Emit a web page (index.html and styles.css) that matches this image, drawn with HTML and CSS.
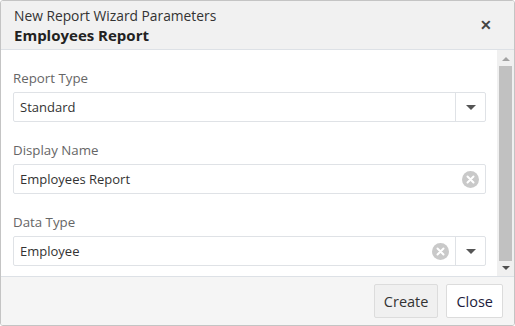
FILE: index.html
```html
<!DOCTYPE html>
<html lang="en">
<head>
  <meta charset="UTF-8">
  <title>New Report Wizard Parameters</title>
  <link rel="stylesheet" href="styles.css">
</head>
<body>
  <div class="dialog">
    <div class="dlg-head">
      <div class="head-text">
        <div class="sub">New Report Wizard Parameters</div>
        <div class="title">Employees Report</div>
      </div>
      <button class="close-x" title="Close">&#x2715;</button>
    </div>
    <div class="dlg-body">
      <div class="content">
        <div class="field">
          <label>Report Type</label>
          <div class="box">
            <span class="val">Standard</span>
            <span class="drop"><i class="tri"></i></span>
          </div>
        </div>
        <div class="field">
          <label>Display Name</label>
          <div class="box">
            <span class="val">Employees Report</span>
            <span class="clear"><svg width="17" height="17" viewBox="0 0 17 17"><circle cx="8.5" cy="8.5" r="8.5" fill="#c9c9c9"/><path d="M5.5 5.5l6 6M11.5 5.5l-6 6" stroke="#fff" stroke-width="2" stroke-linecap="round"/></svg></span>
          </div>
        </div>
        <div class="field">
          <label>Data Type</label>
          <div class="box">
            <span class="val">Employee</span>
            <span class="clear"><svg width="17" height="17" viewBox="0 0 17 17"><circle cx="8.5" cy="8.5" r="8.5" fill="#c9c9c9"/><path d="M5.5 5.5l6 6M11.5 5.5l-6 6" stroke="#fff" stroke-width="2" stroke-linecap="round"/></svg></span>
            <span class="drop"><i class="tri"></i></span>
          </div>
        </div>
      </div>
      <div class="scroll">
        <span class="arr up"></span>
        <span class="thumb"></span>
        <span class="arr down"></span>
      </div>
    </div>
    <div class="dlg-foot">
      <button class="btn create">Create</button>
      <button class="btn">Close</button>
    </div>
  </div>
</body>
</html>
```
FILE: styles.css
```css
body{
  margin: 0;
  font-family: "Open Sans", "Noto Sans", sans-serif;
  color: #333;
}
.dialog{
  width: 513px;
  height: 324px;
  border: 1px solid #c4c4c4;
  border-radius: 3px;
  display: flex;
  flex-direction: column;
  overflow: hidden;
}
.dlg-head{
  height: 38px;
  padding: 5px 13px 5px 13px;
  background: #f1f1f1;
  border-bottom: 1px solid #dde1e6;
  display: flex;
  align-items: center;
}
.head-text{
  flex: 1;
}
.sub{
  font-size: 13.8px;
  line-height: 20px;
  color: #333;
}
.title{
  font-size: 15px;
  font-weight: 700;
  line-height: 19px;
  color: #222;
}
.close-x{
  border: 0;
  background: none;
  padding: 0;
  font-size: 14px;
  font-weight: 700;
  color: #444;
  margin-right: 9px;
}
.dlg-body{
  height: 226px;
  display: flex;
  background: #fff;
}
.content{
  flex: 1;
  padding: 18px 11px 0 12px;
}
.field{
  margin-bottom: 18px;
}
.field label{
  display: block;
  font-size: 13.3px;
  line-height: 20px;
  color: #666;
  margin-bottom: 4px;
}
.box{
  height: 28px;
  border: 1px solid #dfe2e6;
  border-radius: 2px;
  display: flex;
  align-items: center;
}
.val{
  flex: 1;
  padding-left: 6px;
  font-size: 13px;
  color: #333;
}
.drop{
  width: 29px;
  height: 28px;
  border-left: 1px solid #dfe2e6;
  display: flex;
  align-items: center;
  justify-content: center;
}
.tri{
  width: 0;
  height: 0;
  border-left: 5px solid transparent;
  border-right: 5px solid transparent;
  border-top: 5px solid #555;
}
.clear{
  display: flex;
  margin-right: 6px;
}
.scroll{
  width: 17px;
  background: #f0f0f0;
  display: flex;
  flex-direction: column;
  align-items: center;
}
.arr{
  width: 0;
  height: 0;
  border-left: 4px solid transparent;
  border-right: 4px solid transparent;
}
.up{
  border-bottom: 4px solid #a3a3a3;
  margin: 7px 0 5px;
}
.down{
  border-top: 4px solid #505050;
  margin: 5px 0 6px;
}
.thumb{
  flex: 1;
  width: 13px;
  background: #c1c1c1;
}
.dlg-foot{
  flex: 1;
  background: #f5f5f5;
  border-top: 1px solid #dde1e6;
  display: flex;
  align-items: center;
  justify-content: flex-end;
  gap: 8px;
  padding-right: 11px;
}
.btn{
  height: 34px;
  padding: 0 9px;
  font-family: inherit;
  font-size: 14.5px;
  color: #1c1c3c;
  background: #fff;
  border: 1px solid #dcdcdc;
  border-radius: 2px;
}
.btn.create{
  background: #f0f0f0;
  color: #333;
}
```
